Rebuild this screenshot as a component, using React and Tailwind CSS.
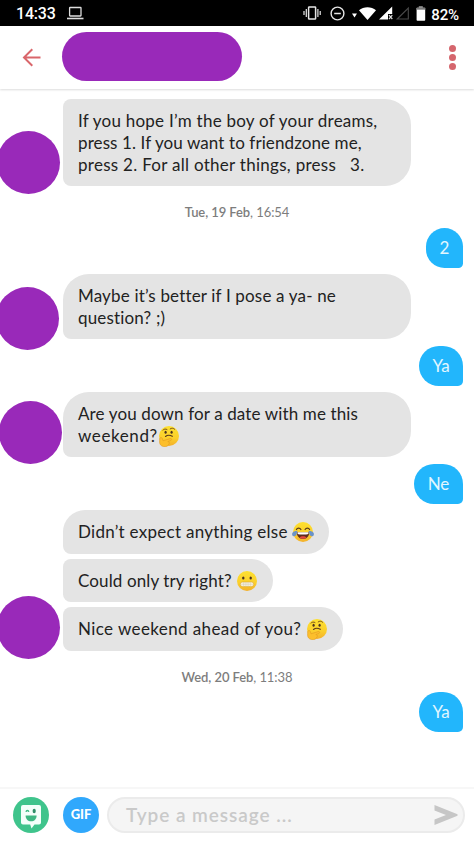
import React from "react";

function StatusBar() {
  return (
    <div className="flex h-[26px] items-center bg-black pl-4 pr-[15px] font-['Roboto',sans-serif] text-white">
      <span className="mt-px w-10 text-[16px] leading-[26px] font-medium tracking-[-0.2px]">14:33</span>
      <svg className="ml-[11px]" width="17" height="14" viewBox="0 0 17 14" fill="none" stroke="#ddd">
        <rect x="2.6" y="1.5" width="11.4" height="8.5" rx="0.5" strokeWidth="1.3" />
        <path d="M0 12.5H16.5" strokeWidth="1.6" />
      </svg>
      <svg className="ml-auto" width="18" height="14" viewBox="0 0 18 14" fill="none" stroke="#e6e6e6">
        <rect x="5.6" y="1" width="7" height="12" rx="0.6" strokeWidth="1.5" />
        <path d="M3.3 3V11M1 5V9M14.9 3V11M17.2 5V9" strokeWidth="1.2" />
      </svg>
      <svg className="ml-[9px]" width="15" height="15" viewBox="0 0 15 15" fill="none" stroke="#e6e6e6">
        <circle cx="7.5" cy="7.5" r="6.4" strokeWidth="1.4" />
        <path d="M4.2 7.5H10.8" strokeWidth="1.5" />
      </svg>
      <svg className="ml-[6px]" width="25" height="15" viewBox="0 0 25 15" fill="#fff">
        <path d="M1 7.5H6L3.5 11.5Z" />
        <path d="M8 4.3C12.5 .2 20.5 .2 25 4.3L16.5 14Z" />
      </svg>
      <svg className="ml-[3px]" width="14" height="14" viewBox="0 0 14 14">
        <path d="M0 13.5L13.2 .5V8H9V13.5Z" fill="#fff" />
        <path d="M10 9.2L13.3 13M13.3 9.2L10 13" stroke="#ddd" strokeWidth="1.2" />
      </svg>
      <svg className="ml-[3px]" width="14" height="14" viewBox="0 0 14 14" fill="none">
        <path d="M1.2 13L12.3 2V13Z" stroke="#4a4a4a" strokeWidth="1.1" />
      </svg>
      <svg className="ml-[6px]" width="10" height="15" viewBox="0 0 10 15">
        <rect x="2.8" y="0" width="4" height="3" fill="#777" />
        <rect x="0.6" y="1.7" width="8.6" height="13" rx="0.8" fill="#fff" />
        <rect x="0.6" y="1.7" width="8.6" height="2" fill="#777" />
      </svg>
      <span className="ml-[5px] mt-[3px] text-[15px] leading-[26px] font-medium tracking-[-0.1px]">82%</span>
    </div>
  );
}

function Header() {
  return (
    <header className="flex h-[63px] items-start bg-white shadow-[0_1px_2px_rgba(0,0,0,0.14)]">
      <svg className="ml-[22px] mt-[22px]" width="19" height="19" viewBox="0 0 19 19" fill="none" stroke="#d9666b" strokeWidth="2">
        <path d="M18.5 9.5H2M10.3 1.3L2 9.5L10.3 17.7" />
      </svg>
      <div className="ml-[21px] mt-[6px] h-[49px] w-[180px] rounded-full bg-[#9929b9]" />
      <div className="ml-auto mr-[18px] mt-[19px] flex flex-col gap-[2px]">
        <span className="size-[7px] rounded-full bg-[#d5666d]" />
        <span className="size-[7px] rounded-full bg-[#d5666d]" />
        <span className="size-[7px] rounded-full bg-[#d5666d]" />
      </div>
    </header>
  );
}

function Face({ kind, className = "" }) {
  return (
    <svg className={"inline-block h-[22px] w-[22px] align-[-5px] " + className} viewBox="0 0 22 22">
      <defs>
        <linearGradient id={"g-" + kind} x1="0" y1="0" x2="0" y2="1">
          <stop offset="0" stopColor="#fde030" />
          <stop offset="0.6" stopColor="#fbcf2c" />
          <stop offset="1" stopColor="#f3b02c" />
        </linearGradient>
      </defs>
      <circle cx="11" cy="11" r="10" fill={"url(#g-" + kind + ")"} />
      {kind === "think" && (
        <>
          <ellipse cx="7.6" cy="7.3" rx="1.1" ry="1.5" fill="#4a3320" />
          <ellipse cx="13.6" cy="7.3" rx="1.1" ry="1.5" fill="#4a3320" />
          <path d="M4.9 5.2C6 3.9 7.6 3.7 9 4.5M12.2 3.9C13.7 2.8 15.4 3 16.6 4.2" fill="none" stroke="#6d4517" strokeWidth="0.9" strokeLinecap="round" />
          <path d="M7.5 11.4C9.5 9.9 12 10 14.3 11.3" fill="none" stroke="#5a3b1c" strokeWidth="1.2" strokeLinecap="round" />
          <path d="M1.8 13.5C2 12.2 3.8 12.2 4.3 13.4L5 15.8L12 13.6C13.8 13.1 14.3 14.8 12.8 15.4L9.8 16.6C11.3 16.8 11.7 18 11 19C10.3 20.8 8.4 22 5.8 21.6C3 21.2 1.6 19.4 1.6 17Z" fill="#fcbf2c" stroke="#e39a20" strokeWidth="0.6" />
        </>
      )}
      {kind === "joy" && (
        <>
          <path d="M4.4 8.5C5.3 6.6 7.9 6.6 8.9 8.5M13.1 8.5C14.1 6.6 16.7 6.6 17.6 8.5" fill="none" stroke="#5a3b1c" strokeWidth="1.2" strokeLinecap="round" />
          <path d="M4.8 11.3H17.2C17.2 15.3 14.6 18 11 18S4.8 15.3 4.8 11.3Z" fill="#5c2b1d" />
          <path d="M5.6 11.3H16.4V13C14 13.8 8 13.8 5.6 13Z" fill="#fff" />
          <path d="M7.5 16.4C9 14.7 13 14.7 14.5 16.4C13 18.2 9 18.2 7.5 16.4Z" fill="#e5483f" />
          <path d="M5.5 9.8C2.8 9.8 .1 11 .1 13.2C.1 15.8 3.6 15.8 4.5 13.6Z" fill="#6a93c8" />
          <path d="M16.5 9.8C19.2 9.8 21.9 11 21.9 13.2C21.9 15.8 18.4 15.8 17.5 13.6Z" fill="#6a93c8" />
        </>
      )}
      {kind === "grimace" && (
        <>
          <ellipse cx="7.3" cy="8" rx="1.2" ry="1.6" fill="#4a3320" />
          <ellipse cx="14.7" cy="8" rx="1.2" ry="1.6" fill="#4a3320" />
          <rect x="4.3" y="12" width="13.4" height="4.6" rx="2" fill="#f6f0dc" stroke="#dba92c" strokeWidth="0.6" />
          <path d="M4.8 14.3H17.2M7.6 12V16.6M9.9 12V16.6M12.1 12V16.6M14.4 12V16.6" stroke="#d2cbb5" strokeWidth="0.5" />
        </>
      )}
    </svg>
  );
}

function Line({ children, className = "" }) {
  return <span className={"block h-[22px] whitespace-pre " + className}>{children}</span>;
}

function Received({ children, className }) {
  return (
    <div className={"bg-[#e4e4e4] pl-[15px] text-[17px] leading-[22px] text-[#222] " + className}>
      {children}
    </div>
  );
}

function Avatar({ className }) {
  return <div className={"size-[63px] shrink-0 rounded-full bg-[#9929b9] " + className} />;
}

function Sent({ children, className }) {
  return (
    <div className={"flex h-10 items-center justify-center self-end rounded-[20px] rounded-br-[5px] bg-[#22b6fc] text-[17px] text-[#e2f6ff] mr-[11px] " + className}>
      {children}
    </div>
  );
}

function Stamp({ day, time, className }) {
  return (
    <div className={"flex h-5 items-center justify-center whitespace-pre text-[13px] tracking-[-0.08px] text-[#7d7d7d] " + className}>
      <span className="font-semibold">{day}</span>
      <span>, {time}</span>
    </div>
  );
}

function Composer() {
  return (
    <footer className="flex h-[55px] items-center border-t-2 border-[#f7f7f7] bg-white pb-px pl-[13px] pr-[9px]">
      <svg width="36" height="36" viewBox="0 0 36 36">
        <circle cx="18" cy="18" r="18" fill="#3fc48c" />
        <path d="M10 8H26Q28 8 28 10V25.5Q28 27.5 26 27.5H21.5L18.5 31.5L17.2 27.5H10Q8 27.5 8 25.5V10Q8 8 10 8Z" fill="#f4fffa" />
        <path d="M12.6 18.5H23.6C23.6 22 21.3 24.3 18.1 24.3S12.6 22 12.6 18.5Z" fill="#3fb883" />
        <path d="M13 14.8C13.4 13 15.4 13 15.8 14.8" fill="none" stroke="#3fb883" strokeWidth="1.4" />
        <ellipse cx="21.2" cy="14" rx="1.6" ry="2.2" fill="#2f8f68" />
      </svg>
      <div className="ml-[14px] flex size-9 items-center justify-center rounded-full bg-[#30a8fc] text-[13px] font-black text-white">GIF</div>
      <div className="ml-2 flex h-9 flex-1 items-center rounded-full border-2 border-[#ebebeb] bg-[#f5f5f5] pl-[17px] pr-1 text-[19px] font-semibold tracking-[0.95px] text-[#c9c9c9]">
        <span>Type a message ...</span>
        <svg className="ml-auto" width="26" height="20" viewBox="0 0 26 20" fill="#c6c6c6">
          <path d="M1.5 0L24.5 9.3V10.7L1.5 20V14.5L13 10L1.5 5.5Z" />
        </svg>
      </div>
    </footer>
  );
}

export default function App() {
  return (
    <div className="flex h-[842px] w-[474px] flex-col overflow-hidden bg-white font-['Lato','Noto_Sans',sans-serif]">
      <StatusBar />
      <Header />
      <main className="flex flex-1 flex-col pt-[10px]">
        <div className="flex h-[87px] items-end">
          <Avatar className="-ml-[3px] mr-[3px] -mb-2" />
          <Received className="h-[87px] w-[348px] rounded-l-lg rounded-r-[26px] pt-[11px]">
            <Line className="tracking-[0.24px]">If you hope I’m the boy of your dreams,</Line>
            <Line className="tracking-[0.1px]">press 1. If you want to friendzone me,</Line>
            <Line className="tracking-[0.28px]">{"press 2. For all other things, press   3."}</Line>
          </Received>
        </div>
        <Stamp day="Tue, 19 Feb" time="16:54" className="mt-[17px]" />
        <Sent className="mt-[5px] w-[37px]">2</Sent>
        <div className="mt-[6px] flex h-[65px] items-end">
          <Avatar className="-ml-[4px] mr-[4px] -mb-[11px]" />
          <Received className="h-[65px] w-[348px] rounded-[26px] rounded-bl-lg pt-[11px]">
            <Line className="tracking-[0.17px]">Maybe it’s better if I pose a ya- ne</Line>
            <Line className="tracking-[0.17px]">question? ;)</Line>
          </Received>
        </div>
        <Sent className="mt-[7px] w-11">Ya</Sent>
        <div className="mt-[6px] flex h-[65px] items-end">
          <Avatar className="-ml-px mr-px -mb-[7px]" />
          <Received className="h-[65px] w-[348px] rounded-[26px] rounded-bl-lg pt-[11px]">
            <Line className="tracking-[0.13px]">Are you down for a date with me this</Line>
            <Line className="tracking-[0.6px]">weekend?<Face kind="think" /></Line>
          </Received>
        </div>
        <Sent className="mt-[7px] w-[49px]">Ne</Sent>
        <div className="mt-[6px] flex h-[141px] items-end">
          <Avatar className="-ml-[3px] mr-[3px] -mb-2" />
          <div className="flex flex-col gap-[5px]">
            <Received className="h-[43.6px] w-[266px] rounded-[22px] rounded-bl-lg pt-[11px]">
              <Line className="tracking-[0.28px]">Didn’t expect anything else <Face kind="joy" /></Line>
            </Received>
            <Received className="h-[43.6px] w-[210px] rounded-l-lg rounded-r-[22px] pt-[11px]">
              <Line className="tracking-[0.12px]">Could only try right? <Face kind="grimace" /></Line>
            </Received>
            <Received className="h-[43.6px] w-[280px] rounded-l-lg rounded-r-[22px] pt-[11px]">
              <Line className="tracking-[0.4px]">Nice weekend ahead of you? <Face kind="think" /></Line>
            </Received>
          </div>
        </div>
        <Stamp day="Wed, 20 Feb" time="11:38" className="mt-[17px]" />
        <Sent className="mt-1 w-11">Ya</Sent>
      </main>
      <Composer />
    </div>
  );
}
